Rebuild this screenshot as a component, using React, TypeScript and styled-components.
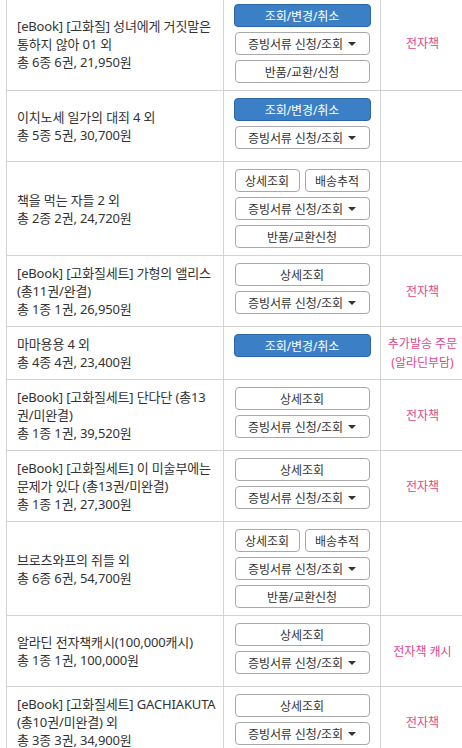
import styled, { createGlobalStyle } from 'styled-components';

const GlobalStyle = createGlobalStyle`
	html, body {
		margin: 0;
		padding: 0;
		background: #ffffff;
		overflow: hidden;
	}
	body {
		font-family: "Noto Sans", "Noto Sans CJK KR", sans-serif;
		color: #333333;
	}
`

//styles
const Table = styled.div`
	margin: -4px 0 0 6px;
	width: 470px;
	border-left: 1px solid #d3d3d3;
	border-top: 1px solid #d3d3d3;
`

const Row = styled.div`
	display: grid;
	grid-template-columns: 217px 157px 1fr;
	border-bottom: 1px solid #d3d3d3;
`

const InfoCell = styled.div`
	display: flex;
	flex-direction: column;
	justify-content: center;
	padding: 8px 10px;
	border-right: 1px solid #d3d3d3;
	font-size: 13px;
	line-height: 18px;
	letter-spacing: -0.15px;
	color: #333333;
	span {
		display: block;
		white-space: nowrap;
	}
`

const ActionCell = styled.div<{ $pb: number }>`
	display: flex;
	flex-direction: column;
	align-items: center;
	gap: 5px;
	padding: 7px 0 ${p => p.$pb}px;
	border-right: 1px solid #d3d3d3;
`

const TypeCell = styled.div`
	display: flex;
	flex-direction: column;
	align-items: center;
	justify-content: center;
	width: 83px;
	font-size: 12px;
	line-height: 19px;
	color: #e2468a;
	text-align: center;
`

const Button = styled.button<{ $primary?: boolean; $half?: boolean }>`
	box-sizing: border-box;
	display: flex;
	align-items: center;
	justify-content: center;
	gap: 5px;
	width: ${p => (p.$half ? '65px' : '135px')};
	height: 23px;
	padding: 0;
	margin: 0;
	border-radius: 4px;
	font-family: "Noto Sans", "Noto Sans CJK KR", sans-serif;
	font-size: 12px;
	letter-spacing: -0.1px;
	cursor: pointer;
	border: 1px solid ${p => (p.$primary ? '#2b67a3' : '#a9a9a9')};
	background: ${p => (p.$primary ? '#3b80c6' : '#ffffff')};
	color: ${p => (p.$primary ? '#ffffff' : '#333333')};
	${p => p.$primary && 'width: 137px;'}
`

const Pair = styled.div`
	display: flex;
	gap: 5px;
`

const Caret = styled.i`
	display: inline-block;
	width: 0;
	height: 0;
	border-left: 4px solid transparent;
	border-right: 4px solid transparent;
	border-top: 4px solid #333333;
`

type Action = 'manage' | 'doc' | 'return' | 'returnReq' | 'detail' | 'pair';

type Order = {
	title: string[];
	summary: string;
	actions: Action[];
	kind?: string[];
};

const orders: Order[] = [
	{ title: ['[eBook] [고화질] 성녀에게 거짓말은', '통하지 않아 01 외'], summary: '총 6종 6권, 21,950원', actions: ['manage', 'doc', 'return'], kind: ['전자책'] },
	{ title: ['이치노세 일가의 대죄 4 외'], summary: '총 5종 5권, 30,700원', actions: ['manage', 'doc'] },
	{ title: ['책을 먹는 자들 2 외'], summary: '총 2종 2권, 24,720원', actions: ['pair', 'doc', 'returnReq'] },
	{ title: ['[eBook] [고화질세트] 가형의 앨리스', '(총11권/완결)'], summary: '총 1종 1권, 26,950원', actions: ['detail', 'doc'], kind: ['전자책'] },
	{ title: ['마마용용 4 외'], summary: '총 4종 4권, 23,400원', actions: ['manage'], kind: ['추가발송 주문', '(알라딘부담)'] },
	{ title: ['[eBook] [고화질세트] 단다단 (총13', '권/미완결)'], summary: '총 1종 1권, 39,520원', actions: ['detail', 'doc'], kind: ['전자책'] },
	{ title: ['[eBook] [고화질세트] 이 미술부에는', '문제가 있다 (총13권/미완결)'], summary: '총 1종 1권, 27,300원', actions: ['detail', 'doc'], kind: ['전자책'] },
	{ title: ['브로츠와프의 쥐들 외'], summary: '총 6종 6권, 54,700원', actions: ['pair', 'doc', 'returnReq'] },
	{ title: ['알라딘 전자책캐시(100,000캐시)'], summary: '총 1종 1권, 100,000원', actions: ['detail', 'doc'], kind: ['전자책 캐시'] },
	{ title: ['[eBook] [고화질세트] GACHIAKUTA', '(총10권/미완결) 외'], summary: '총 3종 3권, 34,900원', actions: ['detail', 'doc'], kind: ['전자책'] },
];

function renderAction(action: Action, i: number) {
	switch (action) {
		case 'manage':
			return <Button key={i} $primary>조회/변경/취소</Button>;
		case 'doc':
			return <Button key={i}>증빙서류 신청/조회 <Caret /></Button>;
		case 'return':
			return <Button key={i}>반품/교환/신청</Button>;
		case 'returnReq':
			return <Button key={i}>반품/교환신청</Button>;
		case 'detail':
			return <Button key={i}>상세조회</Button>;
		case 'pair':
			return (
				<Pair key={i}>
					<Button $half>상세조회</Button>
					<Button $half>배송추적</Button>
				</Pair>
			);
	}
}

function OrderRow({ order }: { order: Order }) {
	const pb = order.actions.length === 2 ? 12 : 7;
	return (
		<Row>
			<InfoCell>
				{order.title.map(line => <span key={line}>{line}</span>)}
				<span>{order.summary}</span>
			</InfoCell>
			<ActionCell $pb={pb}>{order.actions.map(renderAction)}</ActionCell>
			<TypeCell>
				{order.kind?.map(line => <div key={line}>{line}</div>)}
			</TypeCell>
		</Row>
	);
}

export default function App() {
	return (
		<>
			<GlobalStyle />
			<Table>
				{orders.map(order => <OrderRow key={order.title[0]} order={order} />)}
			</Table>
		</>
	);
}
